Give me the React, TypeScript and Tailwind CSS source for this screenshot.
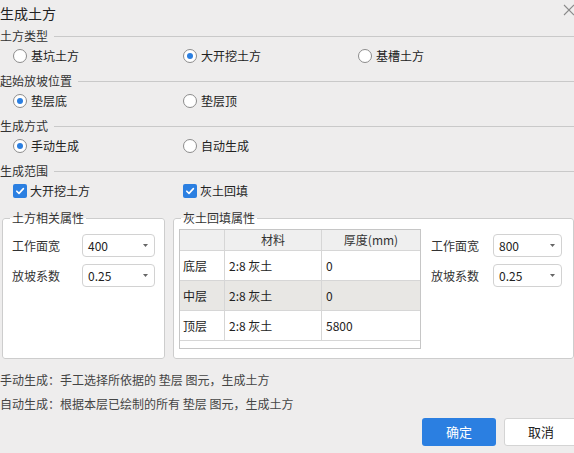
import type { ReactNode } from "react";

const font = { fontFamily: '"Noto Sans CJK SC", "Noto Sans", sans-serif' };

function Radio({ checked, label }: { checked?: boolean; label: string }) {
  return (
    <div className="flex items-center">
      <span className="flex h-[14px] w-[14px] items-center justify-center rounded-full border border-[#8c8c8c] bg-white">
        {checked && <span className="h-[6px] w-[6px] rounded-full bg-[#2b7fe1]" />}
      </span>
      <span className="ml-[4px] text-[12px] leading-[16px] text-[#222]">{label}</span>
    </div>
  );
}

function Check({ label }: { label: string }) {
  return (
    <div className="flex items-center">
      <span className="flex h-[14px] w-[14px] items-center justify-center rounded-[2px] bg-[#2b7fe1]">
        <svg width="10" height="10" viewBox="0 0 10 10" fill="none" stroke="white" strokeWidth="1.6" strokeLinecap="round" strokeLinejoin="round">
          <path d="M1.8 5.2 4 7.4 8.4 2.6" />
        </svg>
      </span>
      <span className="ml-[3px] text-[12px] leading-[16px] text-[#222]">{label}</span>
    </div>
  );
}

function Section({ title, children }: { title: string; children: ReactNode }) {
  return (
    <div className="mb-[5px]">
      <div className="flex h-[20px] items-center">
        <span className="text-[12px] leading-[16px] text-[#333]">{title}</span>
        <span className="ml-[6px] h-px flex-1 bg-[#c9c9c9]" />
      </div>
      <div className="flex h-[20px] items-center pl-[13px]">{children}</div>
    </div>
  );
}

function Select({ value, w }: { value: string; w: string }) {
  return (
    <div className={`flex h-[23px] items-center justify-between rounded-[4px] border border-[#d2d2d2] bg-white pl-[5px] pr-[6px] ${w}`}>
      <span className="text-[12px] leading-[16px] text-[#222]">{value}</span>
      <svg width="5" height="3" viewBox="0 0 5 3">
        <path d="M0 0h5L2.5 3z" fill="#666" />
      </svg>
    </div>
  );
}

function Field({ label, value, w, lw }: { label: string; value: string; w: string; lw: string }) {
  return (
    <div className="flex items-center">
      <span className={`text-[12px] leading-[16px] text-[#333] ${lw}`}>{label}</span>
      <Select value={value} w={w} />
    </div>
  );
}

const rows = [
  { name: "底层", mat: "2:8 灰土", t: "0", bg: "bg-white" },
  { name: "中层", mat: "2:8 灰土", t: "0", bg: "bg-[#e8e7e4]" },
  { name: "顶层", mat: "2:8 灰土", t: "5800", bg: "bg-white" },
];

export default function App() {
  return (
    <div className="relative h-[453px] w-[574px] overflow-hidden bg-[#eeeded]" style={font}>
      <div className="flex h-[26px] items-center justify-between">
        <span className="text-[14px] leading-[18px] text-[#222]">生成土方</span>
        <svg className="mr-[-1px] mb-[6px]" width="12" height="12" viewBox="0 0 12 12" stroke="#8a8a8a" strokeWidth="1.1">
          <path d="M1 1l10 10M11 1 1 11" />
        </svg>
      </div>

      <Section title="土方类型">
        <div className="w-[170px]"><Radio label="基坑土方" /></div>
        <div className="w-[175px]"><Radio checked label="大开挖土方" /></div>
        <Radio label="基槽土方" />
      </Section>
      <Section title="起始放坡位置">
        <div className="w-[170px]"><Radio checked label="垫层底" /></div>
        <Radio label="垫层顶" />
      </Section>
      <Section title="生成方式">
        <div className="w-[170px]"><Radio checked label="手动生成" /></div>
        <Radio label="自动生成" />
      </Section>
      <Section title="生成范围">
        <div className="w-[170px]"><Check label="大开挖土方" /></div>
        <Check label="灰土回填" />
      </Section>

      <div className="mt-[9px] flex">
        <fieldset className="ml-[2px] h-[149px] w-[163px] rounded-[3px] border border-[#cdcdcd] bg-white">
          <legend className="ml-[7px] px-[2px] text-[12px] leading-[16px] text-[#333]">土方相关属性</legend>
          <div className="flex flex-col gap-[7px] pl-[9px] pt-[8px]">
            <Field label="工作面宽" value="400" w="w-[73px]" lw="w-[70px]" />
            <Field label="放坡系数" value="0.25" w="w-[73px]" lw="w-[70px]" />
          </div>
        </fieldset>

        <fieldset className="ml-[8px] h-[149px] w-[401px] rounded-[3px] border border-[#cdcdcd] bg-white">
          <legend className="ml-[7px] px-[2px] text-[12px] leading-[16px] text-[#333]">灰土回填属性</legend>
          <div className="flex pl-[5px] pt-[3px]">
            <div className="h-[120px] w-[242px] border border-[#c6c6c6] text-[12px] leading-[16px] text-[#222]">
              <div className="grid h-[21px] grid-cols-[45px_97px_98px] bg-[#efefef]">
                <div className="border-b border-r border-[#d6d6d6]" />
                <div className="flex items-center justify-center border-b border-r border-[#d6d6d6] text-[#333]">材料</div>
                <div className="flex items-center justify-center border-b border-[#d6d6d6] text-[#333]">厚度(mm)</div>
              </div>
              {rows.map((r) => (
                <div key={r.name} className={`grid h-[30px] grid-cols-[45px_97px_98px] ${r.bg}`}>
                  <div className="flex items-center border-b border-r border-[#d6d6d6] pl-[3px]">{r.name}</div>
                  <div className="flex items-center border-b border-r border-[#d6d6d6] pl-[4px]">{r.mat}</div>
                  <div className="flex items-center border-b border-[#d6d6d6] pl-[4px]">{r.t}</div>
                </div>
              ))}
            </div>
            <div className="ml-[10px] flex flex-col gap-[7px] pt-[5px]">
              <Field label="工作面宽" value="800" w="w-[69px]" lw="w-[62px]" />
              <Field label="放坡系数" value="0.25" w="w-[69px]" lw="w-[62px]" />
            </div>
          </div>
        </fieldset>
      </div>

      <div className="mt-[13px] flex flex-col gap-[8px] text-[12px] leading-[16px] text-[#444]">
        <p>手动生成：手工选择所依据的 垫层 图元，生成土方</p>
        <p>自动生成：根据本层已绘制的所有 垫层 图元，生成土方</p>
      </div>

      <div className="mt-[6px] flex gap-[8px] pl-[422px]">
        <button className="h-[28px] w-[74px] shrink-0 rounded-[3px] bg-[#2b7fe1] text-[13px] text-white">确定</button>
        <button className="h-[28px] w-[74px] shrink-0 rounded-[3px] border border-[#d4d4d4] bg-white text-[13px] text-[#222]">取消</button>
      </div>
    </div>
  );
}
